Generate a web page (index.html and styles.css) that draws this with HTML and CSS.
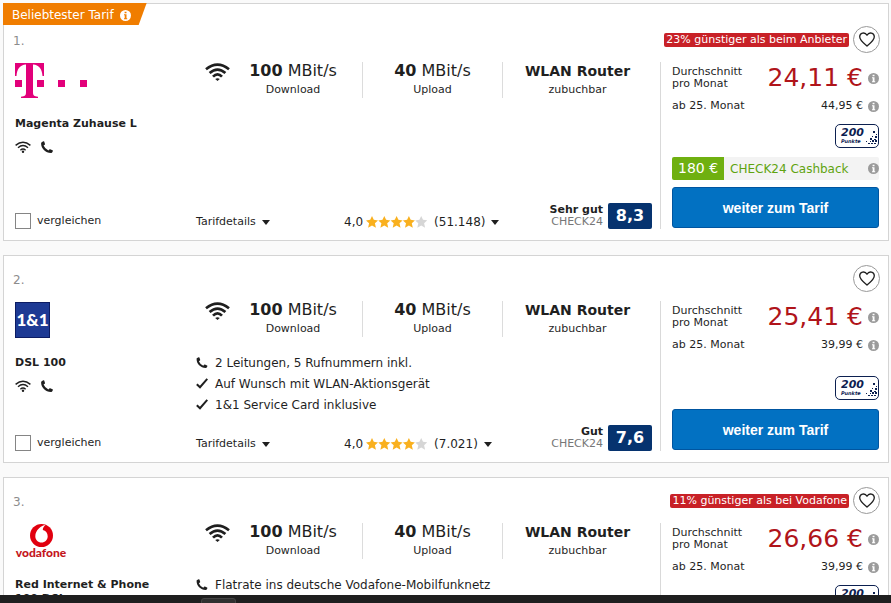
FILE: index.html
```html
<!DOCTYPE html>
<html lang="de">
<head>
<meta charset="utf-8">
<meta name="viewport" content="width=device-width, initial-scale=1">
<title>DSL Tarifvergleich</title>
<link rel="stylesheet" href="styles.css">
</head>
<body>
<svg class="sprite" aria-hidden="true">
  <symbol id="wifi" viewBox="0 0 25 18">
    <g fill="none" stroke="currentColor" stroke-width="2.700">
      <path d="M1 6.200Q12.500-3 24 6.200"/>
      <path d="M4.600 10.100Q12.500 3 20.400 10.100"/>
      <path d="M8 13.600Q12.500 9 17 13.600"/>
    </g>
    <path fill="currentColor" d="M10.200 16Q12.500 14.300 14.800 16L12.500 18z"/>
  </symbol>
  <symbol id="wifi-thin" viewBox="0 0 16 12">
    <g fill="none" stroke="currentColor" stroke-width="1.4">
      <path d="M.6 4.400Q8-1.900 15.400 4.400"/>
      <path d="M3 6.800Q8 2.300 13 6.800"/>
      <path d="M5.400 9.200Q8 6.900 10.600 9.200"/>
    </g>
    <circle cx="8" cy="10.700" r="1.200" fill="currentColor"/>
  </symbol>
  <symbol id="phone" viewBox="0 0 12 12">
    <path fill="currentColor" d="M.7 1.200 2.300.2Q2.900 0 3.200.6L4 2.900Q4.100 3.400 3.700 3.700L2.600 4.500Q4 7.900 7.400 9.600L8.300 8.500Q8.700 8.100 9.200 8.300L11.500 9.200Q12 9.500 11.900 10L11.300 11.300Q11 11.900 10.200 11.900C4.500 12 0 7.500.1 2.200Q.1 1.500.7 1.200z"/>
  </symbol>
  <symbol id="check" viewBox="0 0 12 11">
    <path fill="none" stroke="currentColor" stroke-width="2" d="M.8 6.200 4 9.200 11.300.8"/>
  </symbol>
  <symbol id="heart" viewBox="0 0 16 15">
    <path fill="none" stroke="currentColor" stroke-width="1.300" stroke-linejoin="round" d="M8 14C5.300 11.600.7 8.500.7 4.800.7 1 5.800-.7 8 3.300 10.200-.7 15.300 1 15.300 4.800 15.300 8.500 10.700 11.600 8 14z"/>
  </symbol>
  <symbol id="info" viewBox="0 0 11 11">
    <circle cx="5.500" cy="5.500" r="5.500" fill="currentColor"/>
    <path class="info-mark" d="M4.600 1.800h1.900v1.500H4.600zM4 4.300h2.500v4h.7v1H4v-1h.7V5.300H4z"/>
  </symbol>
  <symbol id="stars" viewBox="0 0 61 12">
    <g fill="#f9b01e">
      <path id="star" d="M6 0 7.800 3.800 12 4.400 8.900 7.300 9.900 11.800 6 9.600 2.100 11.800 3.100 7.300 0 4.400 4.200 3.800z"/>
      <use href="#star" x="12.300"/><use href="#star" x="24.600"/><use href="#star" x="36.900"/>
    </g>
    <path fill="#d6d6d6" d="M55.200 0 57 3.800 61.200 4.400 58.100 7.300 59.100 11.800 55.200 9.600 51.300 11.800 52.300 7.300 49.200 4.400 53.400 3.800z"/>
  </symbol>
  <symbol id="dots" viewBox="0 0 12 17">
    <path fill="#0c2050" d="M7 3h2v2H7zM10 6h1v1h-1zM6 8h1v1H6zM9 8h2v2H9zM4 10h2v2H4zM8 11h2v1H8zM6 12h2v2H6zM0 13h1v1H0zM4 13h1v1H4zM9 12h2v2H9zM2 15h2v1H2zM5 15h2v1H5zM8 15h2v1H8z"/>
  </symbol>
</svg>

<main class="results">
  <article class="card card--top">
    <div class="ribbon">Beliebtester Tarif <svg class="info"><use href="#info"/></svg></div>
    <header class="head">
      <span class="rank">1.</span>
      <span class="saving">23% günstiger als beim Anbieter</span>
      <button class="fav" type="button" aria-label="Merken"><svg><use href="#heart"/></svg></button>
    </header>
    <section class="provider">
      <div class="logo">
        <svg class="telekom" viewBox="0 0 73 35" role="img" aria-label="Telekom">
          <path fill="#e2007a" d="M0 0H29V13H27.500C27 6 24 2 18 1.600V29C18 32.500 19 33.500 23 33.700V35H6V33.700C10 33.500 11 32.500 11 29V1.600C5 2 2 6 1.500 13H0zM0 17h7v7H0zM22 17h7v7h-7zM43 17h7v7h-7zM65 17h7v7h-7z"/>
        </svg>
      </div>
      <h2 class="name">Magenta Zuhause L</h2>
      <div class="features-mini"><svg class="i-wifi"><use href="#wifi-thin"/></svg><svg class="i-phone"><use href="#phone"/></svg></div>
      <label class="compare"><input type="checkbox"> vergleichen</label>
    </section>
    <section class="details">
      <div class="specs">
        <div class="spec spec--down"><svg class="wifi"><use href="#wifi"/></svg><p><span class="big"><b>100</b> MBit/s</span>Download</p></div>
        <div class="spec"><p><span class="big"><b>40</b> MBit/s</span>Upload</p></div>
        <div class="spec"><p><b class="big big--router">WLAN Router</b>zubuchbar</p></div>
      </div>
      <footer class="foot">
        <button class="link more" type="button">Tarifdetails <i class="caret"></i></button>
        <button class="link rating" type="button">4,0 <svg class="stars"><use href="#stars"/></svg> <span class="count">(51.148)</span> <i class="caret"></i></button>
        <div class="grade"><p><b>Sehr gut</b>CHECK24</p><strong>8,3</strong></div>
      </footer>
    </section>
    <section class="offer">
      <div class="price"><span class="label">Durchschnitt<br>pro Monat</span><span class="amount">24,11 €</span><svg class="info"><use href="#info"/></svg></div>
      <div class="later"><span>ab 25. Monat</span><span class="then">44,95 €</span><svg class="info"><use href="#info"/></svg></div>
      <div class="points"><p><b>200</b><span>Punkte</span></p><svg><use href="#dots"/></svg></div>
      <div class="cashback"><b>180 €</b><span>CHECK24 Cashback</span><svg class="info"><use href="#info"/></svg></div>
      <button class="cta" type="button">weiter zum Tarif</button>
    </section>
  </article>

  <article class="card">
    <header class="head">
      <span class="rank">2.</span>
      <button class="fav" type="button" aria-label="Merken"><svg><use href="#heart"/></svg></button>
    </header>
    <section class="provider">
      <div class="logo"><span class="oneone">1&amp;1</span></div>
      <h2 class="name">DSL 100</h2>
      <div class="features-mini"><svg class="i-wifi"><use href="#wifi-thin"/></svg><svg class="i-phone"><use href="#phone"/></svg></div>
      <label class="compare"><input type="checkbox"> vergleichen</label>
    </section>
    <section class="details">
      <div class="specs">
        <div class="spec spec--down"><svg class="wifi"><use href="#wifi"/></svg><p><span class="big"><b>100</b> MBit/s</span>Download</p></div>
        <div class="spec"><p><span class="big"><b>40</b> MBit/s</span>Upload</p></div>
        <div class="spec"><p><b class="big big--router">WLAN Router</b>zubuchbar</p></div>
      </div>
      <ul class="perks">
        <li><svg><use href="#phone"/></svg>2 Leitungen, 5 Rufnummern inkl.</li>
        <li><svg><use href="#check"/></svg>Auf Wunsch mit WLAN-Aktionsgerät</li>
        <li><svg><use href="#check"/></svg>1&amp;1 Service Card inklusive</li>
      </ul>
      <footer class="foot">
        <button class="link more" type="button">Tarifdetails <i class="caret"></i></button>
        <button class="link rating" type="button">4,0 <svg class="stars"><use href="#stars"/></svg> <span class="count">(7.021)</span> <i class="caret"></i></button>
        <div class="grade"><p><b>Gut</b>CHECK24</p><strong>7,6</strong></div>
      </footer>
    </section>
    <section class="offer">
      <div class="price"><span class="label">Durchschnitt<br>pro Monat</span><span class="amount">25,41 €</span><svg class="info"><use href="#info"/></svg></div>
      <div class="later"><span>ab 25. Monat</span><span class="then">39,99 €</span><svg class="info"><use href="#info"/></svg></div>
      <div class="points"><p><b>200</b><span>Punkte</span></p><svg><use href="#dots"/></svg></div>
      <button class="cta" type="button">weiter zum Tarif</button>
    </section>
  </article>

  <article class="card">
    <header class="head">
      <span class="rank">3.</span>
      <span class="saving">11% günstiger als bei Vodafone</span>
      <button class="fav" type="button" aria-label="Merken"><svg><use href="#heart"/></svg></button>
    </header>
    <section class="provider">
      <div class="logo">
        <div class="vodafone">
          <svg viewBox="0 0 23 23" aria-hidden="true"><circle cx="11.500" cy="11.500" r="11.500" fill="#e1000f"/><path fill="#fff" d="M15.500 1C11.500 1.300 5.300 6 5.300 12.300 5.300 16 8 18.600 11.500 18.600S17.700 16 17.700 12.300C17.700 8.700 15.600 6.700 12.800 6 12.700 4 14 2.200 15.500 1z"/></svg>
          <span>vodafone</span>
        </div>
      </div>
      <h2 class="name">Red Internet &amp; Phone 100 DSL</h2>
    </section>
    <section class="details">
      <div class="specs">
        <div class="spec spec--down"><svg class="wifi"><use href="#wifi"/></svg><p><span class="big"><b>100</b> MBit/s</span>Download</p></div>
        <div class="spec"><p><span class="big"><b>40</b> MBit/s</span>Upload</p></div>
        <div class="spec"><p><b class="big big--router">WLAN Router</b>zubuchbar</p></div>
      </div>
      <ul class="perks">
        <li><svg><use href="#phone"/></svg>Flatrate ins deutsche Vodafone-Mobilfunknetz</li>
      </ul>
    </section>
    <section class="offer">
      <div class="price"><span class="label">Durchschnitt<br>pro Monat</span><span class="amount">26,66 €</span><svg class="info"><use href="#info"/></svg></div>
      <div class="later"><span>ab 25. Monat</span><span class="then">39,99 €</span><svg class="info"><use href="#info"/></svg></div>
      <div class="points points--first"><p><b>200</b><span>Punkte</span></p><svg><use href="#dots"/></svg></div>
    </section>
  </article>
</main>
<div class="taskbar"><span class="tab"></span></div>
</body>
</html>
```
FILE: styles.css
```css
* { box-sizing: border-box; margin: 0; padding: 0; }

body {
  height: 100vh;
  display: flex;
  flex-direction: column;
  overflow: hidden;
  background: #fafafa;
  color: #1f1f1f;
  font: 11px/14px "DejaVu Sans", sans-serif;
}

button { font: inherit; color: inherit; border: 0; background: none; }
svg { display: block; flex: none; }
.sprite { position: absolute; width: 0; height: 0; }

.results {
  flex: 1;
  min-height: 0;
  overflow: hidden;
  padding: 3px 2px 0 3px;
  display: flex;
  flex-direction: column;
  gap: 14px;
}

.card {
  position: relative;
  flex: none;
  display: grid;
  grid-template-columns: 192px 1fr 228px;
  grid-template-rows: 45px auto;
  padding-bottom: 11px;
  background: #fff;
  border: 1px solid #d4d4d4;
}
.card--top { padding-top: 13px; }

.ribbon {
  position: absolute;
  top: -1px;
  left: -1px;
  display: flex;
  align-items: center;
  gap: 6px;
  height: 22px;
  padding: 2px 16px 0 9px;
  background: #f07d00;
  color: #fff;
  font-size: 12px;
  clip-path: polygon(0 0, 100% 0, calc(100% - 8px) 100%, 0 100%);
}
.info { width: 11px; height: 11px; color: #9b9b9b; }
.info-mark { fill: var(--mark, #fff); }
.ribbon .info { color: #fff; --mark: #f07d00; }

.head {
  grid-column: 1 / -1;
  display: flex;
  align-items: center;
  gap: 4px;
  padding: 0 8px 0 9px;
}
.rank { margin-right: auto; padding-top: 3px; font-size: 12px; color: #8c8c8c; }
.saving {
  padding: 0 2px;
  border-radius: 2px;
  background: #c82127;
  color: #fff;
}
.fav {
  display: grid;
  place-items: center;
  width: 27px;
  height: 27px;
  border: 1px solid #999;
  border-radius: 50%;
  background: #fff;
}
.fav svg { width: 16px; height: 15px; }

.provider { display: flex; flex-direction: column; align-items: flex-start; padding-left: 11px; }
.logo { height: 37px; padding-top: 1px; margin-bottom: 18px; }
.telekom { width: 73px; height: 35px; }
.oneone {
  display: grid;
  place-items: center;
  width: 35px;
  height: 36px;
  background: #1d3a94;
  border: 1px solid #0c1c63;
  color: #fff;
  font: 900 17px/34px Lato, sans-serif;
}
.vodafone { width: 52px; display: flex; flex-direction: column; align-items: center; }
.vodafone svg { width: 23px; height: 23px; }
.vodafone span { color: #c4161c; font: 900 12px/12px Lato, sans-serif; }
.name { font-size: 11px; line-height: 14px; max-width: 160px; }
.features-mini { display: flex; align-items: center; gap: 10px; height: 12px; margin-top: 10px; }
.i-wifi { width: 16px; height: 12px; }
.i-phone { width: 12px; height: 12px; }
.compare { display: flex; align-items: center; gap: 6px; margin-top: auto; }
.compare input {
  appearance: none;
  width: 16px;
  height: 16px;
  border: 1px solid #858585;
  background: #fff;
}

.details { display: flex; flex-direction: column; padding-right: 8px; }
.specs { display: grid; grid-template-columns: 167px 140px 1fr; }
.spec {
  display: flex;
  justify-content: center;
  height: 36px;
  border-right: 1px solid #dcdcdc;
  text-align: center;
}
.spec:last-child { border: 0; }
.spec--down { justify-content: flex-start; }
.spec--down p { flex: 1; padding-right: 6px; }
.wifi { width: 25px; height: 18px; margin: 1px 0 0 9px; }
.big { display: block; font-size: 16px; line-height: 18px; }
.big--router { font-size: 14px; }
.spec p { line-height: 20px; }

.perks { list-style: none; padding: 15px 0 10px; font-size: 12px; }
.perks li { display: flex; align-items: center; gap: 7px; height: 21px; }
.perks svg { width: 12px; height: 11px; }

.foot { display: flex; align-items: flex-end; margin-top: auto; }
.link { display: flex; align-items: center; height: 14px; cursor: pointer; }
.more { width: 148px; gap: 6px; }
.rating { gap: 3px; font-size: 12px; }
.stars { width: 61px; height: 12px; }
.count { margin: 0 3px 0 4px; }
.caret {
  border: 4px solid transparent;
  border-top: 5px solid #1f1f1f;
  border-bottom: 0;
}
.grade { display: flex; align-items: center; gap: 5px; margin-left: auto; text-align: right; }
.grade p { color: #777; line-height: 12px; }
.grade b { display: block; color: #1f1f1f; }
.grade strong {
  width: 44px;
  border-radius: 2px;
  background: #06336f;
  color: #fff;
  font-size: 16px;
  line-height: 26px;
  text-align: center;
}

.offer {
  display: flex;
  flex-direction: column;
  padding: 0 9px 1px 11px;
  border-left: 1px solid #d9d9d9;
}
.price, .later { display: flex; align-items: center; gap: 5px; }
.price { height: 32px; }
.label { line-height: 12px; }
.amount { margin-left: auto; color: #b0141a; font-size: 25px; line-height: 32px; }
.later { height: 14px; margin: 5px 0 11px; }
.then { margin-left: auto; }
.points {
  display: flex;
  align-self: flex-end;
  align-items: flex-end;
  justify-content: space-between;
  width: 44px;
  height: 24px;
  margin: auto 0 9px;
  padding: 2px 0 2px 5px;
  border: 1px solid #0c2050;
  border-radius: 5px;
  color: #0c2050;
  font-style: italic;
  font-weight: bold;
}
.points--first { margin-top: 0; }
.points b, .points span { display: block; }
.points b { font-size: 11px; line-height: 11px; }
.points span { font-size: 5px; line-height: 7px; }
.points svg { width: 12px; height: 17px; }
.cashback {
  display: flex;
  align-items: center;
  height: 23px;
  margin-bottom: 7px;
  background: #f3f3f3;
  border-radius: 2px;
  color: #5fa30f;
  font-size: 12px;
}
.cashback b {
  margin-right: 6px;
  padding: 0 6px;
  border-radius: 2px 0 0 2px;
  background: #6fb010;
  color: #fff;
  font-size: 14px;
  font-weight: normal;
  line-height: 23px;
}
.cashback .info { margin-left: auto; }
.cta {
  height: 41px;
  border: 1px solid #0055a0;
  border-radius: 3px;
  background: #0271c2;
  color: #fff;
  font: bold 14px/16px "Liberation Sans", sans-serif;
  cursor: pointer;
}

.taskbar { flex: none; height: 8px; padding: 3px 0 0 201px; background: #1f1f1f; overflow: hidden; }
.tab { display: block; width: 35px; height: 8px; border: 1px solid #444; border-radius: 3px; background: #303030; }
```
